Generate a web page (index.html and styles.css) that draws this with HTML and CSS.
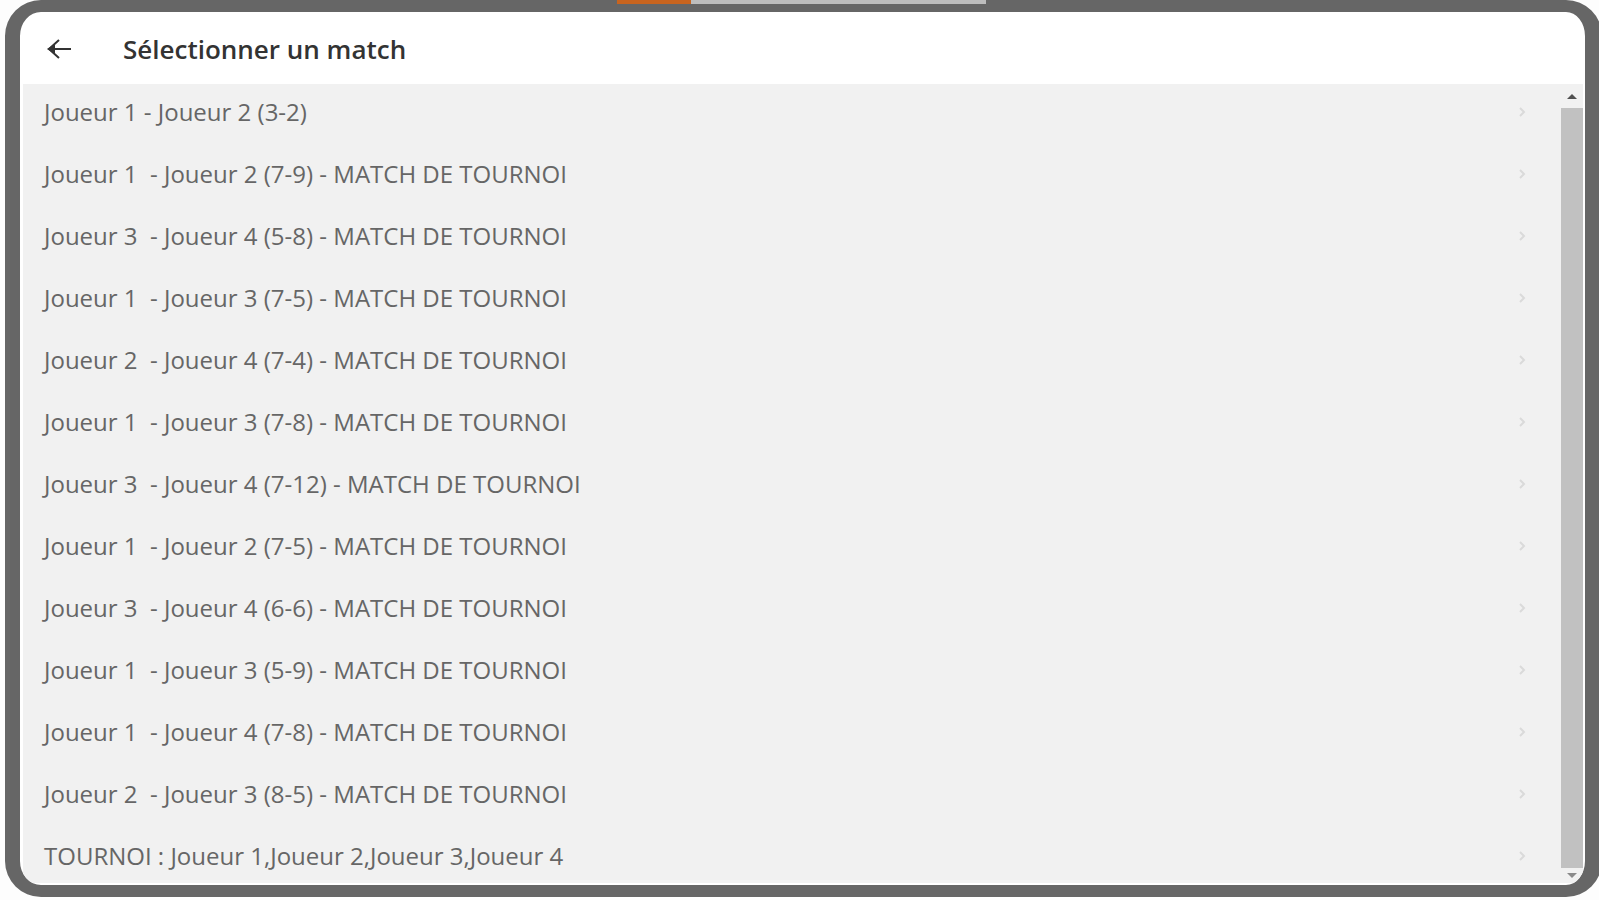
FILE: index.html
```html
<!DOCTYPE html>
<html lang="fr">
  <head>
    <meta charset="utf-8" />
    <title>Sélectionner un match</title>
    <link rel="stylesheet" href="styles.css">
  </head>
  <body>
    <div class="progress"></div>
    <div class="dialog">
      <header class="header">
        <button class="back" aria-label="Retour">
          <svg width="26" height="22" viewBox="0 0 26 22" fill="none" stroke="#333" stroke-width="2">
            <path d="M25 11H3M13 2L3 11L13 20" />
            <path d="M1 11L9 6V16Z" fill="#333" stroke="none" />
          </svg>
        </button>
        <h1>Sélectionner un match</h1>
      </header>
      <div class="content">
        <ul class="matches" id="matches"></ul>
        <!-- scrollbar -->
        <div class="scrollbar">
          <span class="arrow up"></span>
          <div class="thumb"></div>
          <span class="arrow down"></span>
        </div>
      </div>
    </div>

    <!-- Script -->
    <script>
      let matches = [
        "Joueur 1 - Joueur 2 (3-2)",
        "Joueur 1  - Joueur 2 (7-9) - MATCH DE TOURNOI",
        "Joueur 3  - Joueur 4 (5-8) - MATCH DE TOURNOI",
        "Joueur 1  - Joueur 3 (7-5) - MATCH DE TOURNOI",
        "Joueur 2  - Joueur 4 (7-4) - MATCH DE TOURNOI",
        "Joueur 1  - Joueur 3 (7-8) - MATCH DE TOURNOI",
        "Joueur 3  - Joueur 4 (7-12) - MATCH DE TOURNOI",
        "Joueur 1  - Joueur 2 (7-5) - MATCH DE TOURNOI",
        "Joueur 3  - Joueur 4 (6-6) - MATCH DE TOURNOI",
        "Joueur 1  - Joueur 3 (5-9) - MATCH DE TOURNOI",
        "Joueur 1  - Joueur 4 (7-8) - MATCH DE TOURNOI",
        "Joueur 2  - Joueur 3 (8-5) - MATCH DE TOURNOI",
        "TOURNOI : Joueur 1,Joueur 2,Joueur 3,Joueur 4",
      ];
      let list = document.getElementById("matches");
      matches.forEach(function (match) {
        let item = document.createElement("li");
        item.innerHTML =
          '<a href="#"><span></span>' +
          '<svg width="8" height="10" viewBox="0 0 8 10" fill="none" stroke="#dadada" stroke-width="2">' +
          '<path d="M2 1L6 5L2 9" /></svg></a>';
        item.querySelector("span").textContent = match;
        list.appendChild(item);
      });
    </script>
  </body>
</html>
```
FILE: styles.css
```css
* {
  box-sizing: border-box;
}
body {
  margin: 0;
  height: 100vh;
  padding: 0 0 3px 5px;
  background-color: #fdfdfd;
  font-family: "Open Sans", "Noto Sans", sans-serif;
  overflow: hidden;
}
/* bar sitting over the top of the frame */
.progress {
  position: absolute;
  top: 0;
  left: 617px;
  width: 369px;
  height: 4px;
  background: linear-gradient(to right, #c8641f 20%, #bdbdbd 20%);
}
.dialog {
  display: flex;
  flex-direction: column;
  height: 100%;
  margin-right: -3px;
  border: solid #666;
  border-width: 12px 17px 12px 15px;
  border-radius: 36px;
  background-color: #fff;
  overflow: hidden;
}
.header {
  display: flex;
  flex: none;
  align-items: center;
  height: 72px;
  padding: 2px 0 0 26px;
}
.back {
  display: flex;
  width: 77px;
  padding: 0;
  border: none;
  background: none;
  cursor: pointer;
}
h1 {
  margin: 0;
  color: #333;
  font-size: 26px;
  font-weight: 600;
  line-height: 32px;
}
.content {
  display: flex;
  flex: 1;
  min-height: 0;
  margin: 0 2px 2px 3px;
  background-color: #f1f1f1;
}
.matches {
  flex: 1;
  margin: 0;
  padding: 0;
  list-style: none;
  overflow: hidden;
}
.matches a {
  display: flex;
  align-items: center;
  justify-content: space-between;
  height: 62px;
  padding: 0 35px 6px 21px;
  color: #666;
  font-size: 24px;
  line-height: 32px;
  text-decoration: none;
  white-space: pre;
}
.scrollbar {
  display: flex;
  flex-direction: column;
  align-items: center;
  width: 22px;
}
.thumb {
  flex: 1;
  width: 100%;
  background-color: #c1c1c1;
}
.arrow {
  border: 5px solid transparent;
  border-top: none;
  border-bottom: 5px solid #505050;
}
.up {
  margin: 10px 0 9px;
}
.down {
  margin: 5px 0;
  border-top: 5px solid #8a8a8a;
  border-bottom: none;
}
```
